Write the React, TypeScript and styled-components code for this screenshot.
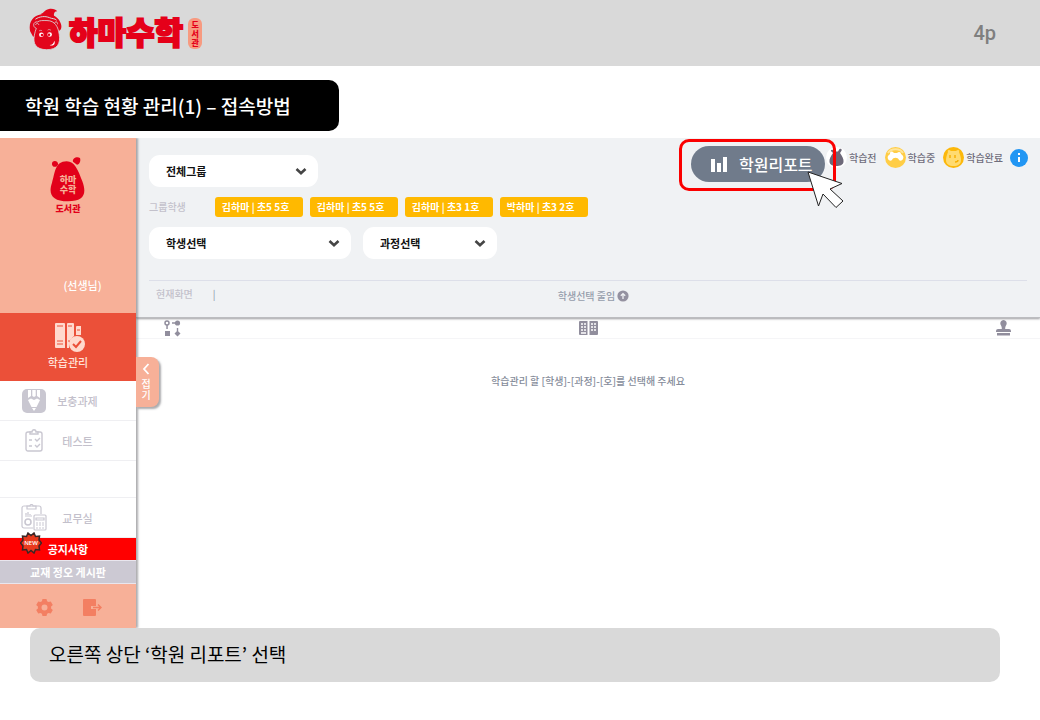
import React from "react";
import styled, { createGlobalStyle } from "styled-components";

const GlobalStyle = createGlobalStyle`
  *, *::before, *::after { box-sizing: border-box; }
  body {
    margin: 0;
    background: #fff;
    font-family: "Noto Sans CJK KR", "Noto Sans", sans-serif;
    color: #111;
  }
  button, select { font-family: inherit; margin: 0; border: 0; cursor: pointer; }
  a { color: inherit; text-decoration: none; }
  h1, p, ul { margin: 0; padding: 0; }
  svg { display: block; flex: none; }
`;

/* ---------- page frame ---------- */

const PageHeader = styled.header`
  display: flex;
  align-items: center;
  justify-content: space-between;
  height: 66px;
  padding: 0 44px 0 29px;
  background: #d9d9d9;
`;

const Brand = styled.a`
  display: flex;
  align-items: center;
  height: 66px;
  padding-bottom: 8px;
`;

const BrandName = styled.span`
  margin-left: 7px;
  padding-top: 4px;
  font-size: 31px;
  line-height: 40px;
  font-weight: 900;
  color: #e50019;
  -webkit-text-stroke: 2px #e50019;
  stroke-linejoin: round;
`;

const BrandBadge = styled.span`
  display: flex;
  flex-direction: column;
  align-items: center;
  justify-content: center;
  width: 14px;
  height: 31px;
  margin: 8px 0 0 5px;
  border-radius: 6px;
  background: #f79a80;
  color: #e50019;
  font-size: 8px;
  line-height: 9px;
  font-weight: 900;
`;

const PageNumber = styled.span`
  font-family: Roboto, "Noto Sans", sans-serif;
  font-size: 20px;
  line-height: 28px;
  font-weight: 500;
  color: #7f7f7f;
`;

const SectionTitle = styled.h1`
  width: fit-content;
  min-width: 339px;
  margin: 14px 0 7px;
  padding: 0 25px;
  border-radius: 0 10px 10px 0;
  background: #000;
  color: #fff;
  font-size: 19px;
  line-height: 51px;
  font-weight: 500;
`;

const Caption = styled.p`
  && {
    margin: 0 40px 0 30px;
    padding: 0 19px 2px;
  }
  border-radius: 10px;
  background: #d9d9d9;
  color: #000;
  font-size: 19px;
  line-height: 52px;
`;

const AppFrame = styled.div`
  display: flex;
  min-height: 490px;
`;

/* ---------- sidebar ---------- */

const Sidebar = styled.aside`
  position: relative;
  z-index: 2;
  display: flex;
  flex-direction: column;
  flex: none;
  width: 136px;
  background: #fff;
  box-shadow: 2px 0 2px rgba(90, 90, 95, 0.5);
  clip-path: inset(0 -40px 0 0);
`;

const Profile = styled.div`
  display: flex;
  flex-direction: column;
  align-items: center;
  justify-content: space-between;
  height: 175px;
  padding: 18px 0 20px;
  background: #f7b098;
`;

const Mascot = styled.div`
  display: grid;
  justify-items: center;
`;

const MascotBody = styled.div`
  display: grid;
  place-items: center;
  > * { grid-area: 1 / 1; }
`;

const MascotText = styled.span`
  display: grid;
  padding-top: 12px;
  color: #f7b098;
  font-size: 9px;
  line-height: 10px;
  font-weight: 900;
  text-align: center;
`;

const MascotLabel = styled.span`
  color: #e2001a;
  font-size: 9px;
  line-height: 13px;
  font-weight: 900;
`;

const Teacher = styled.span`
  margin-left: 29px;
  color: #fff;
  font-size: 11px;
  line-height: 16px;
  font-weight: 500;
`;

const ActiveItem = styled.a`
  display: flex;
  flex-direction: column;
  align-items: center;
  height: 68px;
  padding-top: 9px;
  background: #eb5039;
  color: #ffe1d8;
  font-size: 11px;
  line-height: 19px;
  font-weight: 500;
  svg { margin-left: 5px; }
`;

const MenuItem = styled.a`
  display: grid;
  grid-template-columns: 26px 1fr;
  align-items: center;
  height: 40px;
  padding: 0 28px 0 21px;
  border-bottom: 1px solid #efeff2;
  color: #c3c0cb;
  font-size: 11px;
  line-height: 16px;
  font-weight: 500;
  span { text-align: center; }
  svg { justify-self: center; }
`;

const MenuGap = styled.div`
  flex: 1;
  border-bottom: 1px solid #efeff2;
`;

const Strip = styled.a<{ $tone: string }>`
  position: relative;
  height: 23px;
  border-bottom: 1px solid #e9e6ee;
  background: ${(p) => p.$tone};
  color: #fff;
  font-size: 11px;
  line-height: 22px;
  font-weight: 700;
  text-align: center;
`;

const NewBadge = styled.span`
  position: absolute;
  left: 20px;
  top: -6px;
  display: grid;
  place-items: center;
  color: #fff;
  font: 600 6px/22px "Open Sans", sans-serif;
  > * { grid-area: 1 / 1; }
`;

const SideFooter = styled.div`
  display: flex;
  align-items: center;
  justify-content: center;
  gap: 30px;
  height: 44px;
  padding: 2px 0 0 2px;
  background: #f7b098;
`;

const IconButton = styled.button`
  padding: 0;
  background: none;
`;

const FoldTab = styled.button`
  position: absolute;
  left: 136px;
  top: 219px;
  display: flex;
  flex-direction: column;
  align-items: center;
  width: 23px;
  height: 50px;
  padding: 6px 3px 0 0;
  border-radius: 0 8px 8px 0;
  background: #f7b098;
  box-shadow: 2px 2px 2px rgba(90, 90, 95, 0.5);
  color: #fff;
  font-size: 10px;
  line-height: 11px;
  font-weight: 500;
  svg { margin-bottom: 3px; }
`;

/* ---------- main area ---------- */

const Main = styled.main`
  display: flex;
  flex-direction: column;
  flex: 1;
  min-width: 0;
`;

const Filters = styled.section`
  position: relative;
  z-index: 1;
  height: 180px;
  padding: 0 12px 0 13px;
  background: #f0f2f4;
  border-bottom: 1px solid #bcbdc0;
  box-shadow: 0 1px 2px rgba(90, 90, 95, 0.6);
  clip-path: inset(0 0 -6px 0);
`;

const TopRow = styled.div`
  display: flex;
  justify-content: space-between;
  height: 49px;
`;

const Row = styled.div<{ $gap: number; $top: number }>`
  display: flex;
  align-items: center;
  gap: ${(p) => p.$gap}px;
  margin-top: ${(p) => p.$top}px;
`;

const SelectBox = styled.div<{ $width: number }>`
  position: relative;
  width: ${(p) => p.$width}px;
  height: 32px;
  svg {
    position: absolute;
    right: 11px;
    top: 12px;
    pointer-events: none;
  }
`;

const Select = styled.select`
  appearance: none;
  width: 100%;
  height: 32px;
  padding: 0 30px 0 17px;
  border-radius: 11px;
  background: #fff;
  color: #111;
  font-size: 11px;
  font-weight: 700;
`;

const Muted = styled.span`
  color: #c3c1cb;
  font-size: 10px;
  line-height: 16px;
  font-weight: 500;
`;

const TagList = styled.div`
  display: flex;
  gap: 7px;
  margin-left: 29px;
`;

const Tag = styled.button`
  width: 88px;
  height: 20px;
  padding: 0 0 0 7px;
  border-radius: 3px;
  background: #ffb900;
  color: #fff;
  font-size: 10px;
  line-height: 20px;
  font-weight: 700;
  text-align: left;
  white-space: nowrap;
`;

const Status = styled.div`
  display: grid;
  grid-template-columns: 1fr auto 1fr;
  align-items: start;
  margin: 21px 1px 0 0;
  padding: 5px 0 0 7px;
  border-top: 1px solid #dddfe9;
`;

const StatusLabel = styled.div`
  display: flex;
  gap: 20px;
`;

const StatusBar = styled.span`
  color: #8b93a3;
  font-size: 10px;
  line-height: 16px;
`;

const ToggleButton = styled.button`
  display: flex;
  align-items: center;
  gap: 2px;
  padding: 2px 0 0 4px;
  background: none;
  color: #959dab;
  font-size: 10px;
  line-height: 16px;
  font-weight: 500;
`;

const Tools = styled.div`
  display: flex;
  align-items: flex-start;
  padding-top: 8px;
`;

const ReportWrap = styled.div`
  position: relative;
  margin-right: 1px;
`;

const ReportButton = styled.button`
  display: flex;
  align-items: center;
  gap: 12px;
  width: 134px;
  height: 36px;
  padding: 0 0 0 20px;
  border-radius: 18px;
  background: #707b8b;
  color: #fff;
  font-size: 16px;
  line-height: 36px;
  font-weight: 500;
  white-space: nowrap;
`;

const Highlight = styled.div`
  position: absolute;
  z-index: 1;
  inset: -7px -11px -9px -12px;
  border: 3px solid #fb0000;
  border-radius: 10px;
  pointer-events: none;
`;

const Pointer = styled.svg`
  position: absolute;
  z-index: 2;
  left: 116px;
  top: 25px;
  pointer-events: none;
`;

const Legend = styled.ul`
  display: flex;
  gap: 8px;
  list-style: none;
`;

const LegendItem = styled.li`
  display: flex;
  align-items: center;
  gap: 2px;
  height: 22px;
  color: #6f6d7b;
  font-size: 10px;
  font-weight: 500;
  white-space: nowrap;
`;

const InfoButton = styled(IconButton)`
  && { margin: 3px 0 0 7px; }
`;

const IconStrip = styled.div`
  display: flex;
  justify-content: space-between;
  align-items: center;
  height: 21px;
  padding: 0 29px 0 28px;
  border-bottom: 1px solid #f5f5f7;
`;

const EmptyMessage = styled.p`
  && { padding-top: 34px; }
  color: #858c9a;
  font-size: 10px;
  line-height: 16px;
  font-weight: 500;
  text-align: center;
`;

/* ---------- drawings ---------- */

const BrandHippo = () => (
  <svg width="33" height="42" viewBox="89 22 99 127" aria-hidden="true">
    <g fill="#e2061c">
      <path d="M124 40C134 38 135 27 149 25c12-2 21 2 25 7-8 0-11 5-10 14-10 6-26 2-40-6z" />
      <path d="M92 92C85 58 108 38 140 40c24 0 40 12 45 30 4 12 0 20-8 22l-76 17z" />
    </g>
    <path d="M108 56c12-9 30-10 42-5 8 4 17 2 22 8" fill="none" stroke="#d9d9d9" strokeWidth="3" />
    <path d="M143 60c24 0 34 19 37 42 5 28-6 46-38 46-32 0-43-18-37-44 2-9 3-15 6-20-13-5-10-22 4-20 5-5 16-4 28-4z" fill="#e2061c" stroke="#d9d9d9" strokeWidth="2.500" />
    <path d="M109 72c2-6 9-4 9 0M166 67c3-6 10-3 9 3" fill="none" stroke="#d9d9d9" strokeWidth="2.500" strokeLinecap="round" />
    <path d="M119 92c2-3 7-3 9-1M145 89c3-3 8-2 10 1" fill="none" stroke="#d9d9d9" strokeWidth="2" />
    <g fill="#fff">
      <circle cx="126" cy="103" r="7" />
      <circle cx="151" cy="102" r="7" />
      <path d="M151 134c8 0 12-4 14-13 5 10-4 18-14 13z" />
    </g>
    <g fill="#e2061c">
      <circle cx="128" cy="104" r="4" />
      <circle cx="149" cy="103" r="4" />
    </g>
  </svg>
);

const MascotShape = () => (
  <svg width="36" height="46" viewBox="150 54 108 138" aria-hidden="true">
    <g fill="#e2001a">
      <path d="M200 70c24 0 34 26 47 60 14 38 5 60-43 60s-60-22-48-56c9-28 8-64 44-64z" />
      <path d="M169 86c-12 3-16-8-11-15 8-5 18 1 16 9zM219 71c-3-10 12-17 21-11 3 9-1 19-9 20z" />
    </g>
  </svg>
);

const BooksIcon = () => (
  <svg width="31" height="31" viewBox="0 0 31 31" aria-hidden="true">
    <g fill="#ffd9cd">
      <path d="M1 1h8a1 1 0 0 1 1 1v24H1a1 1 0 0 1-1-1V2a1 1 0 0 1 1-1zM13 1h5a1 1 0 0 1 1 1v12c-4 3-5 7-5 12h-2V2a1 1 0 0 1 1-1zM22 4h4v9h-5V5a1 1 0 0 1 1-1z" />
      <circle cx="22" cy="22" r="8" />
    </g>
    <path d="M2 4h6M2 19h6M2 22h6M13 4h4M13 19h2M22 8h3" stroke="#eb5039" strokeWidth="1" />
    <path d="M18 22l3 3 5-6" fill="none" stroke="#eb5039" strokeWidth="2" />
  </svg>
);

const PencilIcon = () => (
  <svg width="24" height="24" viewBox="0 0 24 24" aria-hidden="true">
    <rect width="24" height="24" rx="5" fill="#c9c7d1" />
    <path d="M6 1h3v6l-3 2zM10.300 1h3.400v6L12 8l-1.700-1zM15 1h3v8l-3-2zM6 11l3-1.500 3 1.500 3-1.500 3 1.500-3.500 7h-5z" fill="#fff" />
    <path d="M10 19h4l-2 3z" fill="#fff" />
  </svg>
);

const ChecklistIcon = () => (
  <svg width="18" height="23" viewBox="0 0 18 23" fill="none" stroke="#c9c7d1" strokeWidth="1.400" aria-hidden="true">
    <rect x="1" y="3" width="16" height="19" rx="2" />
    <path d="M5 5V3h2c0-3 4-3 4 0h2v2z" fill="#fff" />
    <path d="M4 11h3M4 17h3M10 10l2 2 3-3M10 16l2 2 3-3" />
  </svg>
);

const OfficeIcon = () => (
  <svg width="26" height="27" viewBox="0 0 26 27" fill="none" stroke="#c9c7d1" strokeWidth="1.200" aria-hidden="true">
    <path d="M12 24H3a2 2 0 0 1-2-2V4a2 2 0 0 1 2-2h15a2 2 0 0 1 2 2v6" />
    <path d="M6 2v3h9V2h-3c0-2-3-2-3 0z" />
    <circle cx="7" cy="18" r="3" strokeWidth="1.600" />
    <path d="M4 12h7M5 11V9M7 11V8M9 11v-1" />
    <rect x="13" y="11" width="12" height="15" rx="1" fill="#fff" />
    <path d="M15 14h8v2h-8z" />
    <path d="M15 19h2m1 0h2m1 0h2M15 21h2m1 0h2m1 0h2M15 24h2m1 0h2m1 0h2" />
  </svg>
);

const BurstShape = () => (
  <svg width="22" height="22" viewBox="0 0 22 22" aria-hidden="true">
    <path
      d="M8 1l3 2.500L14 1l1.500 3.500 4-.5-.5 4 2.500 3-2.500 3 .5 4-4-.5L14 21l-3-2.500L8 21l-1.500-3.500-4 .5.500-4L.5 11 3 8l-.5-4 4 .5z"
      fill="#e8391d"
      stroke="#3a2625"
      strokeWidth="1.500"
    />
  </svg>
);

const GearIcon = () => (
  <svg width="17" height="17" viewBox="0 0 17 17" aria-hidden="true">
    <path
      fillRule="evenodd"
      fill="#f37f62"
      d="M6.500 0h4l.6 2.300 1.400.8 2.300-.7 2 3.500-1.700 1.700v1.800l1.700 1.700-2 3.500-2.300-.7-1.400.8-.6 2.300h-4l-.6-2.300-1.400-.8-2.300.7-2-3.500 1.700-1.700V7.600L.2 5.900l2-3.500 2.300.7 1.400-.8zM8.500 5.500a3 3 0 1 0 0 6 3 3 0 1 0 0-6z"
    />
  </svg>
);

const ExitIcon = () => (
  <svg width="19" height="17" viewBox="0 0 19 17" aria-hidden="true">
    <path d="M1 0h11a1 1 0 0 1 1 1v6H8v3h5v6a1 1 0 0 1-1 1H1a1 1 0 0 1-1-1V1a1 1 0 0 1 1-1z" fill="#f37f62" />
    <path d="M10 8.500h8M15 5.500l3 3-3 3" fill="none" stroke="#f37f62" strokeWidth="1.500" />
  </svg>
);

const Chevron = () => (
  <svg width="12" height="9" viewBox="0 0 12 9" aria-hidden="true">
    <path d="M1.500 2L6 6.300 10.500 2" fill="none" stroke="#454545" strokeWidth="2.600" />
  </svg>
);

const ReadyIcon = () => (
  <svg width="21" height="21" viewBox="0 0 21 21" aria-hidden="true">
    <circle cx="10.500" cy="10.500" r="10.500" fill="#fff" />
    <path d="M6 5C4 4 5 2 7 3l1 1.500h4L13.500 2c2-1 3 1 1.500 2.500L14 6c2 3 4 6 3.500 9-.5 3-3.500 4-7 4s-6.500-1-7-4C3 12 5 9 7 6z" fill="#6d6979" />
  </svg>
);

const DoingIcon = () => (
  <svg width="21" height="21" viewBox="0 0 21 21" aria-hidden="true">
    <circle cx="10.500" cy="10.500" r="10.500" fill="#ffcd45" />
    <path d="M3 6c3-5 12-5 15 0" fill="none" stroke="#ffe59c" strokeWidth="2" />
    <path d="M3 12c-1-3 1-4 2-5 0-3 2-3 4-1h3c2-2 4-1 4 1 2 1 3 3 2 5-1 2-3 2-4 1-1-3-6-3-7 0-1 1-3 1-4-1z" fill="#fff" />
  </svg>
);

const DoneIcon = () => (
  <svg width="21" height="21" viewBox="0 0 21 21" aria-hidden="true">
    <circle cx="10.500" cy="10.500" r="10.500" fill="#fcb80b" />
    <path d="M5 5c-1-2 1-3 3-1h5c2-2 4-1 3 1 1 3 2 5 2 8 0 4-3 6-7.500 6S3 17 3 13c0-3 1-5 2-8z" fill="#ffdb70" />
    <path d="M7 8v3M12 8v3M12 15c2 0 3-1 3-2" fill="none" stroke="#f7ae00" strokeWidth="1.400" />
  </svg>
);

const InfoIcon = () => (
  <svg width="18" height="18" viewBox="0 0 18 18" aria-hidden="true">
    <circle cx="9" cy="9" r="9" fill="#2196f3" />
    <path d="M8 4h2v2H8zM8 8h2v5H8z" fill="#fff" />
  </svg>
);

const BarsIcon = () => (
  <svg width="16" height="16" viewBox="0 0 16 16" fill="#fff" aria-hidden="true">
    <path d="M0 3h4v13H0zM6 7h4v9H6zM12 1h4v15h-4z" />
  </svg>
);

const UpCircleIcon = () => (
  <svg width="12" height="12" viewBox="0 0 12 12" aria-hidden="true">
    <circle cx="6" cy="6" r="5.600" fill="#9491a0" />
    <path d="M6 9V4M3.800 5.800L6 3.600l2.200 2.200" fill="none" stroke="#f0f2f4" strokeWidth="1.300" />
  </svg>
);

const FlowIcon = () => (
  <svg width="17" height="17" viewBox="0 0 17 17" fill="#918e9d" aria-hidden="true">
    <circle cx="3" cy="3" r="2" fill="none" stroke="#918e9d" strokeWidth="1.500" />
    <path d="M2.300 5h1.500v4H2.300zM1 11h5v5H1zM8 2.300h4v1.500H8zM12.800 8h1.400v3h-1.400zM13.500 10.500l3 3-3 3-3-3z" />
    <circle cx="13.500" cy="3" r="2.600" />
  </svg>
);

const BookIcon = () => (
  <svg width="19" height="15" viewBox="0 0 19 15" aria-hidden="true">
    <path d="M1 0h7.500v14H1a1 1 0 0 1-1-1V1a1 1 0 0 1 1-1zM10.500 0H18a1 1 0 0 1 1 1v12a1 1 0 0 1-1 1h-7.500z" fill="#918e9d" />
    <path d="M2 3h2M5 3h2M2 6h2M5 6h2M2 9h2M5 9h2M2 12h5M12 3h2M15 3h2M12 6h2M15 6h2M12 9h2M15 9h2" stroke="#fff" strokeWidth="1.300" />
  </svg>
);

const StampIcon = () => (
  <svg width="15" height="16" viewBox="0 0 15 16" fill="#918e9d" aria-hidden="true">
    <path d="M7.500 0a3.300 3.300 0 0 1 3 4.500C9.800 6 9 7 9.200 9H13a2 2 0 0 1 2 2v1H0v-1a2 2 0 0 1 2-2h3.800C6 7 5.200 6 4.500 4.500A3.300 3.300 0 0 1 7.500 0zM1 13h13v2.500H1z" />
  </svg>
);

/* ---------- page ---------- */

const students = ["김하마 | 초5 5호", "김하마 | 초5 5호", "김하마 | 초3 1호", "박하마 | 초3 2호"];

function Dropdown({ label, width }: { label: string; width: number }) {
  return (
    <SelectBox $width={width}>
      <Select aria-label={label}>
        <option>{label}</option>
      </Select>
      <Chevron />
    </SelectBox>
  );
}

export default function App() {
  return (
    <>
      <GlobalStyle />
      <PageHeader>
        <Brand href="#">
          <BrandHippo />
          <BrandName>하마수학</BrandName>
          <BrandBadge>
            <span>도</span>
            <span>서</span>
            <span>관</span>
          </BrandBadge>
        </Brand>
        <PageNumber>4p</PageNumber>
      </PageHeader>

      <SectionTitle>학원 학습 현황 관리(1) – 접속방법</SectionTitle>

      <AppFrame>
        <Sidebar>
          <Profile>
            <Mascot>
              <MascotBody>
                <MascotShape />
                <MascotText>
                  <span>하마</span>
                  <span>수학</span>
                </MascotText>
              </MascotBody>
              <MascotLabel>도서관</MascotLabel>
            </Mascot>
            <Teacher>(선생님)</Teacher>
          </Profile>
          <ActiveItem href="#">
            <BooksIcon />
            학습관리
          </ActiveItem>
          <MenuItem href="#">
            <PencilIcon />
            <span>보충과제</span>
          </MenuItem>
          <MenuItem href="#">
            <ChecklistIcon />
            <span>테스트</span>
          </MenuItem>
          <MenuGap />
          <MenuItem href="#">
            <OfficeIcon />
            <span>교무실</span>
          </MenuItem>
          <Strip href="#" $tone="#ff0000">
            <NewBadge>
              <BurstShape />
              <span>NEW</span>
            </NewBadge>
            공지사항
          </Strip>
          <Strip href="#" $tone="#ccc9d3">교재 정오 게시판</Strip>
          <SideFooter>
            <IconButton aria-label="설정">
              <GearIcon />
            </IconButton>
            <IconButton aria-label="로그아웃">
              <ExitIcon />
            </IconButton>
          </SideFooter>
          <FoldTab>
            <svg width="8" height="12" viewBox="0 0 8 12" aria-hidden="true">
              <path d="M6.500 1L2 6l4.500 5" fill="none" stroke="#fff" strokeWidth="1.800" />
            </svg>
            <span>접</span>
            <span>기</span>
          </FoldTab>
        </Sidebar>

        <Main>
          <Filters>
            <TopRow>
              <Row $gap={0} $top={17}>
                <Dropdown label="전체그룹" width={169} />
              </Row>
              <Tools>
                <ReportWrap>
                  <ReportButton>
                    <BarsIcon />
                    학원리포트
                  </ReportButton>
                  <Highlight />
                  <Pointer width="38" height="38" viewBox="0 0 38 38" aria-hidden="true">
                    <path
                      d="M1 1l34 11.500-12 5.500 13 12-7 6.500-13-13.500-4.500 12z"
                      fill="#fff"
                      stroke="#222"
                      strokeWidth="1"
                    />
                  </Pointer>
                </ReportWrap>
                <Legend>
                  <LegendItem>
                    <ReadyIcon />
                    학습전
                  </LegendItem>
                  <LegendItem>
                    <DoingIcon />
                    학습중
                  </LegendItem>
                  <LegendItem>
                    <DoneIcon />
                    학습완료
                  </LegendItem>
                </Legend>
                <InfoButton aria-label="안내">
                  <InfoIcon />
                </InfoButton>
              </Tools>
            </TopRow>
            <Row $gap={0} $top={10}>
              <Muted>그룹학생</Muted>
              <TagList>
                {students.map((name, i) => (
                  <Tag key={i}>{name}</Tag>
                ))}
              </TagList>
            </Row>
            <Row $gap={12} $top={10}>
              <Dropdown label="학생선택" width={202} />
              <Dropdown label="과정선택" width={134} />
            </Row>
            <Status>
              <StatusLabel>
                <Muted>현재화면</Muted>
                <StatusBar>|</StatusBar>
              </StatusLabel>
              <ToggleButton>
                학생선택 줄임
                <UpCircleIcon />
              </ToggleButton>
            </Status>
          </Filters>
          <IconStrip>
            <FlowIcon />
            <BookIcon />
            <StampIcon />
          </IconStrip>
          <EmptyMessage>학습관리 할 [학생]-[과정]-[호]를 선택해 주세요</EmptyMessage>
        </Main>
      </AppFrame>

      <Caption>오른쪽 상단 ‘학원 리포트’ 선택</Caption>
    </>
  );
}
